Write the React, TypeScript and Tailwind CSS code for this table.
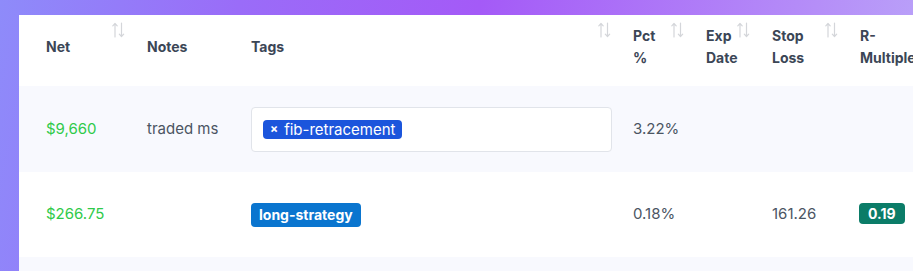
import React from 'react';

function SortIcon() {
  return (
    <svg
      className="absolute right-[4px] top-[7px]"
      width="13"
      height="16"
      viewBox="0 0 13 16"
      fill="none"
      stroke="#d4d6da"
      strokeWidth="1.2"
      strokeLinecap="round"
      strokeLinejoin="round"
    >
      {/* up arrow */}
      <path d="M3 15V1.5M0.8 3.8L3 1.5l2.2 2.3" />
      {/* down arrow */}
      <path d="M9.5 1v13.5M7.3 12.2l2.2 2.3 2.2-2.3" />
    </svg>
  );
}

type Col = { label: React.ReactNode; width: string; sort?: boolean; pad: string };

const cols: Col[] = [
  { label: 'Net', width: 'w-[110px]', sort: true, pad: 'pl-[27px]' },
  { label: 'Notes', width: 'w-[104px]', pad: 'pl-[18px]' },
  { label: 'Tags', width: 'w-[382px]', sort: true, pad: 'pl-[18px]' },
  { label: <>Pct<br />%</>, width: 'w-[73px]', sort: true, pad: 'pl-[18px]' },
  { label: <>Exp<br />Date</>, width: 'w-[66px]', sort: true, pad: 'pl-[18px]' },
  { label: <>Stop<br />Loss</>, width: 'w-[88px]', sort: true, pad: 'pl-[18px]' },
  { label: <>R-<br />Multiple</>, width: 'w-[90px]', pad: 'pl-[18px]' },
];

export default function App() {
  return (
    <div
      className="h-[271px] w-[913px] overflow-hidden pl-[19px] pt-[15px] bg-[linear-gradient(100deg,#8e8bfa_0%,#9a6cf8_25%,#a45af7_50%,#b58ef8_85%,#bba6f9_100%)]"
      style={{ fontFamily: 'Inter, "Open Sans", sans-serif' }}
    >
      <div className="h-[300px] w-[1100px] bg-white">
        <table className="table-fixed border-collapse text-left">
          <colgroup>
            {cols.map((c, i) => (
              <col key={i} className={c.width} />
            ))}
          </colgroup>
          <thead>
            <tr className="h-[71px] bg-white">
              {cols.map((c, i) => (
                <th
                  key={i}
                  className={`relative ${c.pad} pr-[6px] pt-[4px] pb-[11px] align-middle text-[14px] font-bold leading-[22px] text-[#3b4656] whitespace-nowrap`}
                >
                  {c.label}
                  {c.sort && <SortIcon />}
                </th>
              ))}
            </tr>
          </thead>
          <tbody className="text-[15px] text-[#4b5563]">
            <tr className="h-[86px] bg-[#f8f9fe]">
              <td className="pl-[27px] align-middle text-[#2fca4a]">$9,660</td>
              <td className="pl-[18px] align-middle">traded ms</td>
              <td className="pl-[18px] pr-[3px] align-middle">
                <div className="flex h-[45px] items-center rounded-[4px] border border-[#e1e4ea] bg-white px-[11px]">
                  <span className="flex h-[19px] items-center gap-[6px] rounded-[4px] bg-[#1b55dc] pl-[7px] pr-[6px] text-[15px] leading-none text-white">
                    <span className="text-[12px] font-bold">×</span>
                    fib-retracement
                  </span>
                </div>
              </td>
              <td className="pl-[18px] align-middle">3.22%</td>
              <td className="pl-[18px] align-middle"></td>
              <td className="pl-[18px] align-middle"></td>
              <td className="pl-[18px] align-middle"></td>
            </tr>
            <tr className="h-[85px] bg-white">
              <td className="pl-[27px] align-middle text-[#2fca4a]">$266.75</td>
              <td className="pl-[18px] align-middle"></td>
              <td className="pl-[18px] align-middle">
                <span className="inline-flex h-[24px] items-center rounded-[4px] bg-[#0a75cf] px-[8px] text-[14px] font-bold text-white">
                  long-strategy
                </span>
              </td>
              <td className="pl-[18px] align-middle">0.18%</td>
              <td className="pl-[18px] align-middle"></td>
              <td className="pl-[18px] align-middle">161.26</td>
              <td className="pl-[17px] align-middle">
                <span className="inline-flex h-[21px] items-center rounded-[4px] bg-[#0b7c68] px-[9px] text-[14px] font-bold text-white">
                  0.19
                </span>
              </td>
            </tr>
            <tr className="h-[40px] bg-[#f8f9fe]">
              <td colSpan={7}></td>
            </tr>
          </tbody>
        </table>
      </div>
    </div>
  );
}
